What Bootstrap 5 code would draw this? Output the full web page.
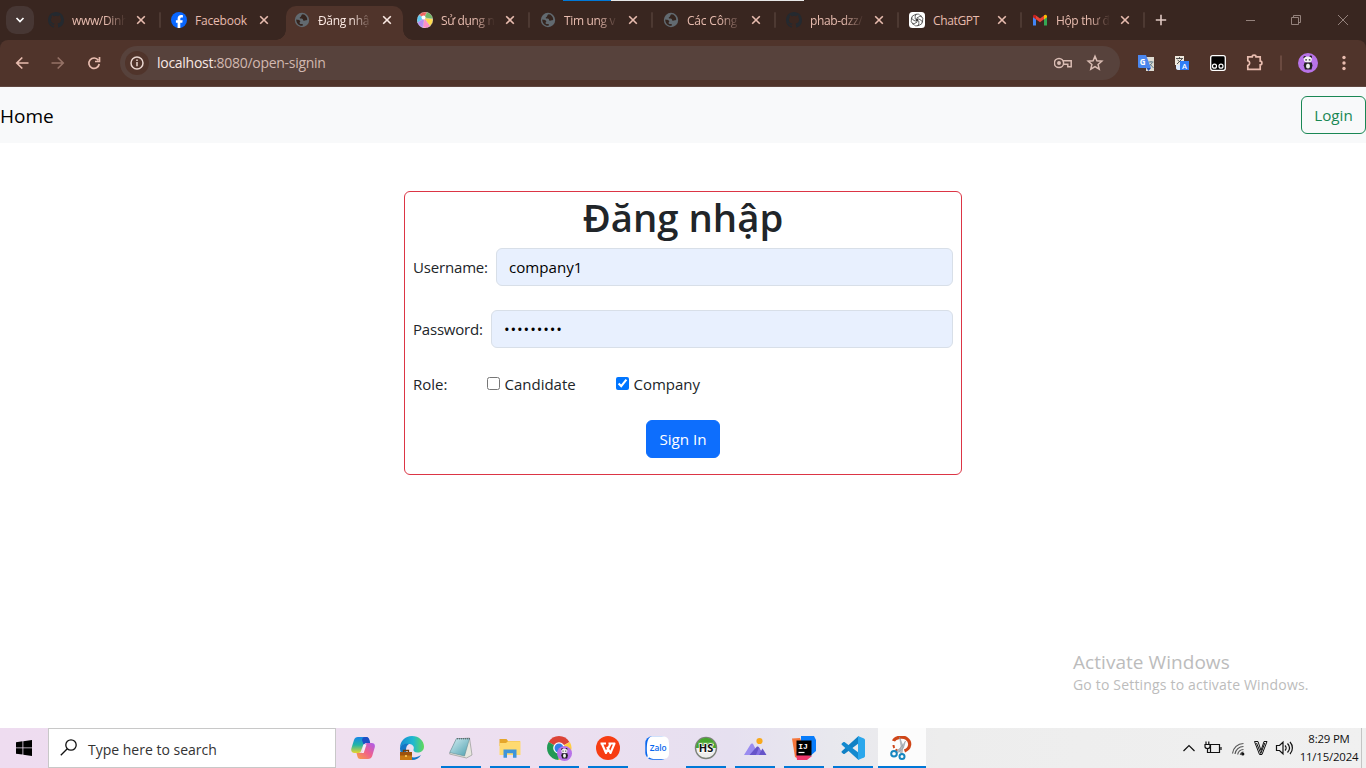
<!DOCTYPE html>
<html lang="vi">
<head>
<meta charset="utf-8">
<title>Đăng nhập</title>
<link href="https://cdn.jsdelivr.net/npm/bootstrap@5.3.0/dist/css/bootstrap.min.css" rel="stylesheet">
<style>
body{font-family:"Open Sans","Noto Sans",sans-serif;font-size:15px;line-height:24px;width:1366px;height:768px;overflow:hidden}
svg{display:block;flex:none}
.strip{height:40px;background:#392620;color:#e8bcaf;font-size:12px;padding-left:6px}
.tabmenu{width:28px;height:28px;border-radius:10px;background:#473734;margin:6px 4px 0 0}
.btab{width:123px;height:40px;padding-left:10px}
.tname{width:54px;margin:1px -2px 0 8px;overflow:hidden;white-space:nowrap;letter-spacing:-.2px}
.tight{letter-spacing:-.35px}
.fade-end{-webkit-mask-image:linear-gradient(90deg,#000 62%,transparent)}
.tclose{margin-left:12px}
.tsep{width:2px;height:16px;background:#4d3932;margin-left:13px;border-radius:1px}
.btab.on{color:#fbe9e3;padding-left:0}
.btab.on .face{width:117px;height:34px;margin:6px 0 0 2px;padding:0 0 6px 8px;border-radius:10px 10px 0 0;background:#50342b;position:relative}
.btab.on .face::before,.btab.on .face::after{content:"";position:absolute;bottom:0;width:10px;height:10px}
.btab.on .face::before{left:-10px;background:radial-gradient(circle at 0 0,transparent 9.5px,#50342b 10px)}
.btab.on .face::after{right:-10px;background:radial-gradient(circle at 100% 0,transparent 9.5px,#50342b 10px)}
.loadline{left:563px;top:0;width:241px;height:1px;background:linear-gradient(90deg,#0078d7 48px,#e8e8e8 48px)}
.tools{height:47px;background:#50342b;border-bottom:1px solid #604740;color:#e8bcaf}
.stripback{background:#392620}
.tools{border-radius:8px 8px 0 0}
.omni{width:1000px;height:34px;border-radius:17px;background:#57423c;padding-left:5px;color:#dfc6be;font-size:14px}
.info{width:24px;height:24px;border-radius:50%;background:#50342b;color:#e9d6d0}
.url{letter-spacing:-.28px;margin-left:8px;color:#d2b8b0}
.url b{font-weight:400;color:#f7e8e3}
.site{height:641px}
.topnav{height:56px}
.brandname{font-size:19px;color:#000;padding-top:2px}
.btn{font-size:15.2px;height:38px;line-height:24px;padding:6px 0}
.w-login{width:65px}.w-sign{width:74px}
.panel{width:558px;height:284px;margin-top:48px;border-radius:6px}
.panel h1{font-size:38.3px;line-height:48px;font-weight:600;height:48px;padding-top:1px;color:#212529}
.form-control,.form-control:focus{background:#e8f0fe;color:#000;height:38px;font-size:15.1px;border-color:#d8dfe8}
.form-control.dots{font-size:15px;letter-spacing:.9px}
.lab-u{width:83px;letter-spacing:-.17px}.lab-p{width:78px;letter-spacing:-.2px}.lab-r{width:74px}
.chk{width:13px;height:13px;margin:0 4.500px 2px 0}
.cand{width:129px}
.mark-act{left:1073px;top:649px;color:#bcbcbc;font-size:14px;line-height:20px;white-space:nowrap;letter-spacing:.18px}
.mark-act div:first-child{font-size:19px;line-height:26px;letter-spacing:.05px}
.taskbar{height:40px;background:linear-gradient(90deg,#eedcf0 0,#eedff0 330px,#ecdff0 560px,#e6e0f0 730px,#e8e8ee 830px,#ededed 940px,#f0f0f0)}
.startb{width:48px}
.search{width:288px;height:40px;border:1px solid #c8c8c8;background:#fff;color:#333;font-size:14px}
.slot{width:48px;height:40px;margin-right:1px;position:relative}
.run::after{content:"";position:absolute;left:4px;right:4px;bottom:0;height:2px;background:#0078d7}
.slot.act{background:#fcfcfc}.slot.act::after{left:0;right:0}
.clock{width:64px;font-size:11.4px;line-height:18px;color:#111;letter-spacing:-.18px;white-space:nowrap;margin-top:-1px}
.showdesk{width:5px;height:40px;border-left:1px solid #c4c4c4}
</style>
<script src="https://cdn.jsdelivr.net/npm/bootstrap@5.3.0/dist/js/bootstrap.bundle.min.js"></script>
</head>
<body class="bg-white position-relative">
<svg width="0" height="0" class="position-absolute">
<symbol id="x" viewBox="0 0 10 10"><path d="M1.2 1.2l7.6 7.6M8.8 1.2L1.2 8.8" stroke="currentColor" stroke-width="1.6"/></symbol>
<symbol id="gh" viewBox="0 0 16 16"><path fill="#24292f" d="M8 0C3.58 0 0 3.58 0 8c0 3.54 2.29 6.53 5.47 7.59.4.07.55-.17.55-.38 0-.19-.01-.82-.01-1.49-2.01.37-2.53-.49-2.69-.94-.09-.23-.48-.94-.82-1.13-.28-.15-.68-.52-.01-.53.63-.01 1.08.58 1.23.82.72 1.21 1.87.87 2.33.66.07-.52.28-.87.51-1.07-1.78-.2-3.64-.89-3.64-3.95 0-.87.31-1.59.82-2.15-.08-.2-.36-1.02.08-2.12 0 0 .67-.21 2.2.82a7.6 7.6 0 0 1 4 0c1.53-1.04 2.2-.82 2.2-.82.44 1.1.16 1.92.08 2.12.51.56.82 1.27.82 2.15 0 3.07-1.87 3.75-3.65 3.95.29.25.54.73.54 1.48 0 1.07-.01 1.93-.01 2.2 0 .21.15.46.55.38A8.01 8.01 0 0 0 16 8c0-4.42-3.58-8-8-8z"/></symbol>
<symbol id="globe" viewBox="0 0 16 16"><circle cx="8" cy="8" r="7.200" fill="#626a70"/><path d="M8.800 2.300c-2 .5-1 2.200-2.400 2.600-1.200.3-.7 1.600.3 1.600 1.200 0 2.400.1 2.400 1.400 0 .8 1.200 1 2 .7.9-.4 2-.1 2.100-.8.2-2.600-1.800-5.200-4.400-5.500zM2.200 7.500c1.200.2 3.300.3 4 1.500.5 1-.9 1.200-.6 2.300.2 1 1.500.6 2.600.6.9.1 1 1.300.2 1.900-3.500.3-6.200-2.800-6.200-6.300z" fill="#35251f"/></symbol>
<symbol id="panda" viewBox="0 0 20 20"><circle cx="10" cy="10" r="10" fill="#b873e8"/><circle cx="6.800" cy="4.200" r="1.300" fill="#222"/><circle cx="12.700" cy="3.900" r="1.300" fill="#222"/><ellipse cx="9.800" cy="6.500" rx="4" ry="3" fill="#f4f4f4"/><path d="M7.300 6.800h1.600M10.800 6.800h1.600" stroke="#222" stroke-width="1.200"/><path d="M6.500 9.500h7.300l.7 3-1 4H7l-1.300-4z" fill="#222"/><ellipse cx="10" cy="13" rx="2" ry="2.600" fill="#eee"/></symbol>
</svg>
<div class="loadline position-absolute"></div>
<header class="strip d-flex">
  <div class="tabmenu d-flex align-items-center justify-content-center"><svg width="10" height="10" viewBox="0 0 10 10"><path d="M1.500 3l3.500 3.500L8.500 3" fill="none" stroke="#fff" stroke-width="1.700"/></svg></div>
  <div class="btab d-flex align-items-center"><svg width="16" height="16"><use href="#gh"/></svg><span class="tname tight fade-end">www/Dinh</span><svg class="tclose" width="10" height="10"><use href="#x"/></svg><i class="tsep"></i></div>
  <div class="btab d-flex align-items-center"><svg width="16" height="16" viewBox="0 0 16 16"><circle cx="8" cy="8" r="8" fill="#0866ff"/><path fill="#fff" d="M6.600 16v-5.300H4.900V8.200h1.700V7c0-2.700 1.200-3.900 3.800-3.900.5 0 1.100.1 1.500.2v2.200h-1.300c-1 0-1.300.5-1.300 1.500v1.200h2.400l-.4 2.500h-2V16z"/></svg><span class="tname">Facebook</span><svg class="tclose" width="10" height="10"><use href="#x"/></svg></div>
  <div class="btab on"><div class="face d-flex align-items-center"><svg width="16" height="16"><use href="#globe"/></svg><span class="tname tight fade-end">Đăng nhậ</span><svg class="tclose" width="10" height="10"><use href="#x"/></svg></div></div>
  <div class="btab d-flex align-items-center"><svg width="16" height="16" viewBox="-8 -8 16 16"><g stroke="#fff" stroke-width=".3"><path d="M-1-2L-6-5A8 8 0 0 1 2-7.700z" fill="#f0655f"/><path d="M-1-2L2-7.700A8 8 0 0 1 7.700-1z" fill="#73b566"/><path d="M-1-2L7.700-1A8 8 0 0 1 5 6.200z" fill="#ffd94d"/><path d="M-1-2L5 6.200A8 8 0 0 1-2 7.700z" fill="#ff8fc8"/><path d="M-1-2L-2 7.700A8 8 0 0 1-7.500 2.500z" fill="#b38cf5"/><path d="M-1-2L-7.500 2.500A8 8 0 0 1-6-5z" fill="#5cc8f2"/></g><circle cx="-1.500" cy="-2.500" r="2" fill="#fff"/></svg><span class="tname tight fade-end">Sử dụng n</span><svg class="tclose" width="10" height="10"><use href="#x"/></svg><i class="tsep"></i></div>
  <div class="btab d-flex align-items-center"><svg width="16" height="16"><use href="#globe"/></svg><span class="tname tight fade-end">Tim ung v</span><svg class="tclose" width="10" height="10"><use href="#x"/></svg><i class="tsep"></i></div>
  <div class="btab d-flex align-items-center"><svg width="16" height="16"><use href="#globe"/></svg><span class="tname fade-end">Các Công</span><svg class="tclose" width="10" height="10"><use href="#x"/></svg><i class="tsep"></i></div>
  <div class="btab d-flex align-items-center"><svg width="16" height="16"><use href="#gh"/></svg><span class="tname tight fade-end">phab-dzz/</span><svg class="tclose" width="10" height="10"><use href="#x"/></svg><i class="tsep"></i></div>
  <div class="btab d-flex align-items-center"><svg width="16" height="16" viewBox="-8 -8 16 16"><rect x="-8" y="-8" width="16" height="16" rx="3.500" fill="#fff"/><g fill="none" stroke="#333" stroke-width=".7"><path id="pt" d="M-1.800-1V-3.800A2.500 2.500 0 0 1 2.600-5L4.900-3.500M-1.800-1L1 .7"/><use href="#pt" transform="rotate(60)"/><use href="#pt" transform="rotate(120)"/><use href="#pt" transform="rotate(180)"/><use href="#pt" transform="rotate(240)"/><use href="#pt" transform="rotate(300)"/></g></svg><span class="tname tight">ChatGPT</span><svg class="tclose" width="10" height="10"><use href="#x"/></svg><i class="tsep"></i></div>
  <div class="btab d-flex align-items-center"><svg width="16" height="16" viewBox="0 0 16 16"><path d="M1 4v9.500h3V6z" fill="#4285f4"/><path d="M12 6v7.500h3V4z" fill="#34a853"/><path d="M4 3.500L8 6.500l4-3V7.300L8 10.300 4 7.300z" fill="#ea4335"/><path d="M1 4.500C1 2.500 2.800 2.200 4 3.200v4.200L1 5.200z" fill="#c5221f"/><path d="M15 4.500c0-2-1.800-2.300-3-1.300v4.200l3-2.200z" fill="#fbbc04"/></svg><span class="tname tight fade-end">Hộp thư đ</span><svg class="tclose" width="10" height="10"><use href="#x"/></svg><i class="tsep"></i></div>
  <div class="d-flex align-items-center flex-fill"><svg class="ms-2 me-auto" width="14" height="12" viewBox="-2 0 14 12"><path d="M6 .8v10.400M.8 6h10.400" stroke="#e0c9c2" stroke-width="1.600"/></svg>
  <svg width="120" height="12" viewBox="1 0 120 12" fill="none" stroke="#94827c"><path d="M0 6.500h10M46.500 3.500h7v7h-7zM48.500 3V1.500h7v7H54M93 1l10 10M103 1L93 11"/></svg></div>
</header>
<div class="stripback"><div class="tools d-flex align-items-center">
  <svg width="120" height="20" viewBox="0 0 120 20" fill="none" stroke="currentColor" stroke-width="1.700"><path d="M28.500 10H17M22.300 4.500L16.800 10l5.500 5.500"/><path opacity=".45" d="M51.500 10H63M57.700 4.500l5.500 5.500-5.500 5.500"/><path d="M98.300 7.200A5.200 5.200 0 1 0 99.200 11M99.500 4v4.500H95"/></svg>
  <div class="omni d-flex align-items-center"><span class="info d-flex align-items-center justify-content-center"><svg width="14" height="14" viewBox="0 0 14 14" fill="none" stroke="currentColor" stroke-width="1.500"><circle cx="7" cy="7" r="6"/><path d="M7 6v4.200M7 3.500v1.600"/></svg></span><span class="url"><b>localhost</b>:8080/open-signin</span>
    <svg class="ms-auto me-3" width="50" height="18" viewBox="1 0 50 18" fill="none" stroke="#dabdb4" stroke-width="1.500"><circle cx="6" cy="9" r="4.600"/><circle cx="6" cy="9" r="1.200" fill="#dabdb4"/><path d="M9.700 6.700H18.200v6h-3.400v-2.500h-4.600"/><path d="M42 2.300l1.900 4.500 4.900.4-3.700 3.200 1.100 4.700L42 12.600l-4.200 2.500 1.100-4.700-3.700-3.200 4.900-.4z"/></svg></div>
  <svg width="246" height="24" viewBox="1120 51 246 24"><path d="M1145 57h9v14h-6z" fill="#ddd"/><rect x="1146" y="57" width="8" height="14" fill="#dedbd2"/><path d="M1148.500 62h5M1151 61v1M1152.500 62.500l-4 4.500M1150 64l3.500 4" stroke="#607d8b" stroke-width="1"/><path d="M1138 55h8l5 13h-11.500q-1.500 0-1.500-1.500z" fill="#4b86ee"/><path d="M1146.500 68h4.500l-2.500 3z" fill="#2451b5"/><text x="1139.800" y="64.700" font-family="Open Sans" font-weight="700" font-size="8" fill="#fff">G</text>
  <path d="M1175 56h9v9h-9z" fill="#eee8de"/><path d="M1176 58.500h7M1179.500 57v2M1182 59l-5 5M1177.500 60l4 3" stroke="#444" stroke-width=".9"/><path d="M1176 65v3c0 1.500 1 2 3 2h2v-5z" fill="#dceaff"/><rect x="1180" y="61" width="9" height="9" fill="#2f7df6"/><text x="1182" y="68.500" font-family="Open Sans" font-weight="600" font-size="7.500" fill="#fff">A</text>
  <rect x="1210.700" y="55.700" width="14.600" height="14.600" rx="2" fill="#000" stroke="#fff" stroke-width="1.300"/><g fill="#000" stroke="#fff" stroke-width="1.200"><circle cx="1214.500" cy="66.200" r="2"/><circle cx="1221" cy="66.200" r="2"/></g>
  <path d="M1247.800 56.800h4.400a1.900 1.600 0 0 1 3.800 0h4.200v4.400a1.700 1.800 0 0 1 0 3.600v4.500h-12.400v-3.700a2.600 2.600 0 0 0 0-5z" fill="none" stroke="#e8bcaf" stroke-width="1.700"/><path d="M1281 55.500v15" stroke="#755248" stroke-width="1.500"/><use href="#panda" x="1298" y="53" width="20" height="20"/><g fill="#e8bcaf"><circle cx="1344" cy="57.500" r="1.700"/><circle cx="1344" cy="63" r="1.700"/><circle cx="1344" cy="68.500" r="1.700"/></g></svg>
</div></div>
<main class="site">
  <nav class="topnav bg-light d-flex align-items-center justify-content-between"><span class="brandname">Home</span><button class="btn btn-outline-success w-login">Login</button></nav>
  <form class="panel border border-danger mx-auto px-2">
    <h1 class="text-center mb-2">Đăng nhập</h1>
    <div class="d-flex align-items-center mb-4"><label class="lab-u flex-shrink-0">Username:</label><input class="form-control" value="company1"></div>
    <div class="d-flex align-items-center mb-4"><label class="lab-p flex-shrink-0">Password:</label><input type="password" class="form-control dots" value="company12"></div>
    <div class="d-flex align-items-center mb-4"><span class="lab-r">Role:</span><label class="cand d-flex align-items-center"><input type="checkbox" class="chk">Candidate</label><label class="d-flex align-items-center"><input type="checkbox" class="chk" checked>Company</label></div>
    <div class="text-center"><button type="button" class="btn btn-primary w-sign">Sign In</button></div>
  </form>
</main>
<div class="mark-act position-absolute"><div>Activate Windows</div><div>Go to Settings to activate Windows.</div></div>
<footer class="taskbar d-flex align-items-center">
  <div class="startb d-flex justify-content-center"><svg width="16" height="16" viewBox="0 0 16 16"><path d="M0 2.200l6.500-.9v6.200H0zM7.300 1.200L16 0v7.500H7.300zM0 8.300h6.500v6.300L0 13.700zM7.300 8.300H16V16l-8.700-1.200z"/></svg></div>
  <div class="search d-flex align-items-center"><svg width="39" height="18" viewBox="-11 0 39 18" fill="none" stroke="#111" stroke-width="1.300"><circle cx="11" cy="6" r="5.200"/><path d="M7.300 9.700L.8 16.200"/></svg><span class="pt-1">Type here to search</span></div>
  <div class="d-flex ps-1" style="margin-left:-1px">
    <div class="slot d-flex align-items-center justify-content-center"><svg width="24" height="24" viewBox="0 0 24 24"><defs><linearGradient id="ca" x1="0" y1="0" x2="0" y2="1"><stop stop-color="#1686e8"/><stop offset=".5" stop-color="#22b5a5"/><stop offset="1" stop-color="#e8d62c"/></linearGradient><linearGradient id="cb" x1="0" y1="1" x2="1" y2="0"><stop stop-color="#f9a23f"/><stop offset=".5" stop-color="#f0608c"/><stop offset="1" stop-color="#a85cf0"/></linearGradient></defs><path d="M7 1h8c2 0 2.500 1.500 3 3l.8 3h-4c-1.500 0-2.300 1-2.800 2.500L10 15c-.7 2-1.800 2-3.500 2H3.500C.5 17-.3 14.500.5 12L3 4c.6-2 2-3 4-3z" fill="url(#ca)"/><path d="M14 1h1.500c2 0 2.500 1.500 3 3l.7 3h-4c-1.500 0-2 1-2.500 2L11 4c.5-2 1-3 3-3z" fill="#1d4fc4"/><path d="M17 23H9.500c-2.200 0-2.700-1-3.200-3l-.8-3H9c1.800 0 2.500-.8 3-2.500L14 9c.6-1.500 1.500-2 3-2h3.500c3 0 3.800 2 3.200 4.500l-2.500 8.500c-.7 2-2 3-4.200 3z" fill="url(#cb)"/><path d="M12.500 8.500h3l-2.800 8.500H9.500c1.300-.3 1.700-1 2-2z" fill="#f6edf8"/></svg></div>
    <div class="slot d-flex align-items-center justify-content-center"><svg width="24" height="24" viewBox="0 0 24 24"><defs><linearGradient id="ed"><stop stop-color="#168bd2"/><stop offset=".55" stop-color="#20b8d0"/><stop offset="1" stop-color="#61d958"/></linearGradient></defs><path d="M0 12C0 5 5 0 12 0s12 5 12 10.500c0 4-3 6-6.500 6-3 0-4.500-1.500-4-3 1-2 0-5-4-5.500C5 7.500 1 9 0 12z" fill="url(#ed)"/><path d="M0 12c1-4 6-5 9-4-4 2-4 9 0 12 3 2 8 2 12-1-2 3.500-5 5-9 5C5 24 0 19 0 12z" fill="#1476c5"/><path d="M0 16h12v8H0z" fill="#c87912"/><path d="M0 16h12v3.500H0z" fill="#9b520c"/><path d="M3.500 16v-1.500h5V16" fill="none" stroke="#6b3b0b" stroke-width="1.300"/><circle cx="6" cy="20" r="1" fill="#ffd45e"/></svg></div>
    <div class="slot run d-flex align-items-center justify-content-center"><svg width="24" height="24" viewBox="0 0 24 24"><defs><linearGradient id="np" x1="0" y1="0" x2="1" y2="1"><stop stop-color="#d4eef3"/><stop offset="1" stop-color="#4c9fae"/></linearGradient></defs><path d="M7.500 3l13-1 2.500 17-5.500 3-17-4z" fill="#e7e7df" stroke="#878b86" stroke-width=".6"/><path d="M7.500 2.500h13L15.500 20 .7 16.500z" fill="url(#np)" stroke="#668d95" stroke-width=".6"/><path d="M8 2.800h13" stroke="#555" stroke-dasharray="1 1"/></svg></div>
    <div class="slot run d-flex align-items-center justify-content-center"><svg width="24" height="24" viewBox="0 0 24 24"><path d="M1.500 3h7l1.500 2h12v5H1.500z" fill="#e5a62b"/><path d="M1.500 7H8l2-1.800h12.500V19h-21z" fill="#ffda71"/><path d="M5.500 13.500h13v8.200h-3.500v-4.500h-6v4.500H5.500z" fill="#3f94d9"/></svg></div>
    <div class="slot run d-flex align-items-center justify-content-center"><svg width="26" height="26" viewBox="-13 -13 26 26"><path d="M0 0L-10.400-6A12 12 0 0 1 10.400-6z" fill="#dc4337"/><path d="M0 0L10.800-6A12 12 0 0 1-.5 12z" fill="#ffcd40"/><path d="M0 0L-.5 12A12 12 0 0 1-10.400-6z" fill="#229954"/><circle r="5.800" fill="#fff"/><circle r="4.500" fill="#347ee9"/><use href="#panda" x="-2" y="-2" width="15" height="15"/></svg></div>
    <div class="slot run d-flex align-items-center justify-content-center"><svg width="24" height="24" viewBox="0 0 24 24"><circle cx="12" cy="12" r="12" fill="#f73d13"/><path d="M4.500 7.500H10M6 8l4 9 4.500-9.200M11 11l3.500 6 4-9.500H12.500" fill="none" stroke="#fff" stroke-width="2.100" stroke-linejoin="round"/></svg></div>
    <div class="slot d-flex align-items-center justify-content-center"><svg width="24" height="24" viewBox="0 0 24 24"><rect x=".3" y=".3" width="23" height="23.500" rx="7" fill="#0867ee"/><path d="M7 .3h10c5 0 7 2 7 7V17c0 4-2 6-6 6H10c-2 0-4-.5-5.500-1.500-1 .5-2 .8-2.800.7 1-1 1-2.200.8-3.200C1.500 16.500 1.500 7 3 4 4 1.800 5 .8 7 .3z" fill="#fff"/><text x="4.700" y="14.500" font-family="Open Sans" font-size="8" font-weight="600" textLength="17" lengthAdjust="spacingAndGlyphs" fill="#0867ee">Zalo</text></svg></div>
    <div class="slot run d-flex align-items-center justify-content-center"><svg width="24" height="24" viewBox="0 0 24 24"><circle cx="12" cy="12" r="10.500" fill="#eee" stroke="#7c8179" stroke-width="1.400"/><path d="M1.800 12a10.200 10.200 0 0 1 20.400 0z" fill="#46a52e"/><path d="M4 6h16v3H4z" fill="#78bd62" opacity=".5"/><text x="12" y="16.200" text-anchor="middle" font-family="Open Sans" font-weight="700" font-size="11" fill="#111" stroke="#fff" stroke-width="1.500" paint-order="stroke">HS</text></svg></div>
    <div class="slot run d-flex align-items-center justify-content-center"><svg width="24" height="24" viewBox="0 0 24 24"><path d="M1 19L7.500 8.500c1-1.500 2.500-1 3 .2l5 10.300z" fill="#9a8cf0"/><path d="M6.500 19l7-8c1-.8 2-.5 2.500.5L18 15l1.500-2.500L23.500 19z" fill="#6654c9"/><path d="M13 19l3-7.500L18 15l-2 4z" fill="#8571e2"/><circle cx="16.500" cy="5" r="3.100" fill="#f8a91c"/></svg></div>
    <div class="slot run d-flex align-items-center justify-content-center"><svg width="24" height="24" viewBox="0 0 24 24"><path d="M0 2.500l8-.5 4 10-5 11-4-2z" fill="#f5763b"/><path d="M9 0h13l2 4v11l-7 6L9 10z" fill="#087cfa"/><path d="M4 16l16 4-5 4H5z" fill="#ee366b"/><rect x="4.500" y="4.500" width="15" height="15" fill="#000"/><text x="6.300" y="12.500" font-family="Liberation Mono" font-weight="700" font-size="8" fill="#fff">IJ</text><path d="M6.500 16.500h6" stroke="#fff" stroke-width="1.200"/></svg></div>
    <div class="slot run d-flex align-items-center justify-content-center"><svg width="24" height="24" viewBox="0 0 24 24"><path d="M17.500 0L1 15c-.7.600-.7 1.200 0 1.800l1.200 1c.5.400 1 .4 1.600 0L18 7z" fill="#1080c5"/><path d="M17.500 24L1 9c-.7-.6-.7-1.200 0-1.800l1.200-1c.5-.4 1-.4 1.600 0L18 17z" fill="#1389cf"/><path d="M17 0l6 2.500c.7.400 1 .8 1 1.500v16c0 .7-.3 1.200-1 1.500L17 24z" fill="#2ba7ec"/></svg></div>
    <div class="slot run act d-flex align-items-center justify-content-center"><svg width="24" height="24" viewBox="0 0 24 24"><path d="M3.500 5C5 1 13 0 16.500 2.500c5 3.500 4 10-2 12.500" fill="none" stroke="#cf4618" stroke-width="3.200"/><path d="M3.500 9c0 3 2 5 5 6" fill="none" stroke="#cf4618" stroke-width="2" stroke-dasharray="3 2"/><path d="M9.500 1l3.500 9-1 8-2.500-2 1.500-6zM15.500 5l-2 7-6 5-1-2 5-4z" fill="#b9bfc5" stroke="#8e969c" stroke-width=".5"/><g fill="none" stroke="#1686bf" stroke-width="2"><circle cx="4" cy="17.700" r="2.800"/><circle cx="12" cy="20.500" r="2.500"/></g></svg></div>
  </div>
  <svg class="ms-auto" width="116" height="24" viewBox="1181 736 116 24" fill="none" stroke="#111" stroke-width="1.200"><path d="M1183.500 751l5.500-5.500 5.500 5.500"/><path d="M1210.500 744.500h9v8h-9zM1221 747v3M1206 741.500v3M1208.800 741.500v3M1205 744.500h5v2c0 1.300-1 2-2.500 2s-2.500-.7-2.500-2zM1207.500 748.500v4h3"/><g stroke="#555"><path d="M1232.500 753.500a11 11 0 0 1 11-10M1235 754a8.500 8.500 0 0 1 8.500-7.500M1237.700 754.500a6 6 0 0 1 5.800-5M1240.300 754.800a3.500 3.500 0 0 1 3.200-2.800"/></g><circle cx="1242.800" cy="754" r="1" fill="#111"/><path stroke-width="1" d="M1254.500 741.500h3.500l3 9 3-9h3l-5 13h-2.500zM1256.500 743l4.300 10.500 4-10.500"/><path d="M1276.500 745.500h3l3.500-3.300v11.600l-3.500-3.300h-3zM1285 745.500c1.500 1.500 1.500 3.500 0 5M1287.500 743.500c2.500 2.700 2.500 6.300 0 9M1290 742c3.200 3.500 3.200 8.500 0 12"/></svg>
  <div class="clock text-center"><div>8:29 PM</div><div>11/15/2024</div></div><div class="showdesk"></div>
</footer>
</body>
</html>
